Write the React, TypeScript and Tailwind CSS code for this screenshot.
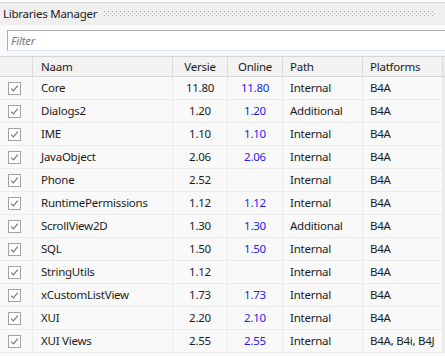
import React from "react";

type Row = { name: string; ver: string; online: string; path: string; plat: string };

const rows: Row[] = [
  { name: "Core", ver: "11.80", online: "11.80", path: "Internal", plat: "B4A" },
  { name: "Dialogs2", ver: "1.20", online: "1.20", path: "Additional", plat: "B4A" },
  { name: "IME", ver: "1.10", online: "1.10", path: "Internal", plat: "B4A" },
  { name: "JavaObject", ver: "2.06", online: "2.06", path: "Internal", plat: "B4A" },
  { name: "Phone", ver: "2.52", online: "", path: "Internal", plat: "B4A" },
  { name: "RuntimePermissions", ver: "1.12", online: "1.12", path: "Internal", plat: "B4A" },
  { name: "ScrollView2D", ver: "1.30", online: "1.30", path: "Additional", plat: "B4A" },
  { name: "SQL", ver: "1.50", online: "1.50", path: "Internal", plat: "B4A" },
  { name: "StringUtils", ver: "1.12", online: "", path: "Internal", plat: "B4A" },
  { name: "xCustomListView", ver: "1.73", online: "1.73", path: "Internal", plat: "B4A" },
  { name: "XUI", ver: "2.20", online: "2.10", path: "Internal", plat: "B4A" },
  { name: "XUI Views", ver: "2.55", online: "2.55", path: "Internal", plat: "B4A, B4i, B4J" },
];

function Check() {
  return (
    <svg width="13" height="13" viewBox="0 0 13 13">
      <rect x="0.5" y="0.5" width="12" height="12" fill="#ffffff" stroke="#a3a3a3" />
      <path d="M3.2 6.6 L5.4 8.8 L9.8 3.6" fill="none" stroke="#767676" strokeWidth="1.2" />
    </svg>
  );
}

const cols = "grid grid-cols-[33px_140px_55px_55px_80px_80px_1fr]";

export default function App() {
  return (
    <div
      className="w-[445px] h-[356px] overflow-hidden bg-[#f9f9f9] text-[11.5px] tracking-[-0.25px] text-[#1b1b1b] border-t border-[#d4d4d4] mt-[2px]"
      style={{ fontFamily: '"Noto Sans", sans-serif' }}
    >
      <div className="h-[22px] bg-[#efefef] flex items-center pl-[3px] pr-[9px] gap-[7px]">
        <span className="leading-none whitespace-nowrap">Libraries Manager</span>
        <svg className="flex-1 h-[6px]" aria-hidden>
          <defs>
            <pattern id="dots" width="4" height="4" patternUnits="userSpaceOnUse">
              <rect x="0" y="0" width="1" height="1" fill="#a8a8a8" />
              <rect x="2" y="2" width="1" height="1" fill="#a8a8a8" />
            </pattern>
          </defs>
          <rect width="100%" height="6" fill="url(#dots)" />
        </svg>
      </div>
      <div className="pt-[5px] pl-[7px] h-[31px]">
        <div className="h-[21px] bg-white border-t border-l border-[#acacac] border-b-[#dbe4ef] border-b flex items-center pl-[3px]">
          <span className="italic text-[#7a7a7a]">Filter</span>
        </div>
      </div>
      <div className={`${cols} h-[21px] bg-[#f2f2f2] border-y border-[#d5d5d5]`}>
        <div className="border-r border-[#dadada]" />
        <div className="border-r border-[#dadada] pl-[8px] flex items-center">Naam</div>
        <div className="border-r border-[#dadada] flex items-center justify-center">Versie</div>
        <div className="border-r border-[#dadada] flex items-center justify-center">Online</div>
        <div className="border-r border-[#dadada] pl-[7px] flex items-center">Path</div>
        <div className="border-r border-[#dadada] pl-[7px] flex items-center">Platforms</div>
        <div className="bg-[#ececec]" />
      </div>
      {rows.map((r) => (
        <div key={r.name} className={`${cols} h-[23px] border-b border-[#ececec]`}>
          <div className="border-r border-[#ececec] flex items-center pl-[8px]">
            <Check />
          </div>
          <div className="border-r border-[#ececec] pl-[8px] flex items-center">{r.name}</div>
          <div className="border-r border-[#ececec] flex items-center justify-center">{r.ver}</div>
          <div className="border-r border-[#ececec] flex items-center justify-center text-[#1d1df2]">
            {r.online}
          </div>
          <div className="border-r border-[#ececec] pl-[7px] flex items-center">{r.path}</div>
          <div className="border-r border-[#ececec] pl-[7px] flex items-center whitespace-nowrap">{r.plat}</div>
          <div className="bg-[#ececec]" />
        </div>
      ))}
    </div>
  );
}
